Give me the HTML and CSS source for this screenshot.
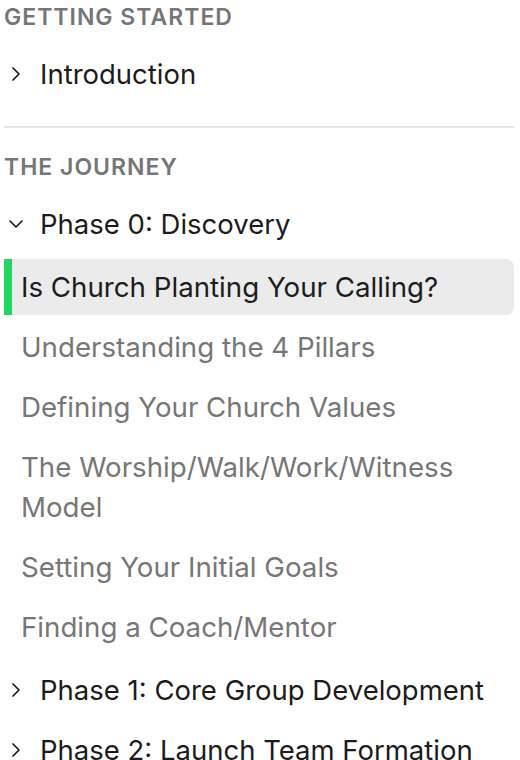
FILE: index.html
```html
<!DOCTYPE html>
<html lang="en">
<head>
    <meta charset="UTF-8">
    <meta name="viewport" content="width=device-width, initial-scale=1.0">
    <title>Docs Sidebar</title>
    <link rel="stylesheet" href="styles.css">
</head>
<body>
    <nav class="sidebar">
        <!-- Getting Started -->
        <div class="section">
            <div class="section-title">Getting Started</div>
            <div class="group">
                <div class="group-row">
                    <svg class="chevron" viewBox="0 0 24 24"><path d="m9 18 6-6-6-6"/></svg>
                    <span>Introduction</span>
                </div>
            </div>
        </div>

        <hr class="divider">

        <!-- The Journey -->
        <div class="section">
            <div class="section-title">The Journey</div>
            <div class="group">
                <div class="group-row">
                    <svg class="chevron" viewBox="0 0 24 24"><path d="m6 9 6 6 6-6"/></svg>
                    <span>Phase 0: Discovery</span>
                </div>
                <ul class="sub-list">
                    <li class="sub-item active">Is Church Planting Your Calling?</li>
                    <li class="sub-item">Understanding the 4 Pillars</li>
                    <li class="sub-item">Defining Your Church Values</li>
                    <li class="sub-item">The Worship/Walk/Work/Witness Model</li>
                    <li class="sub-item">Setting Your Initial Goals</li>
                    <li class="sub-item">Finding a Coach/Mentor</li>
                </ul>
            </div>
            <div class="group">
                <div class="group-row">
                    <svg class="chevron" viewBox="0 0 24 24"><path d="m9 18 6-6-6-6"/></svg>
                    <span>Phase 1: Core Group Development</span>
                </div>
            </div>
            <div class="group">
                <div class="group-row">
                    <svg class="chevron" viewBox="0 0 24 24"><path d="m9 18 6-6-6-6"/></svg>
                    <span>Phase 2: Launch Team Formation</span>
                </div>
            </div>
        </div>
    </nav>
</body>
</html>
```

FILE: styles.css
```css
body {
    margin: 0;
    padding: 0 6px 0 4px;
    background-color: #ffffff;
    font-family: Inter, "Noto Sans", sans-serif;
    color: #1c1c1c;
    overflow: hidden;
}

.sidebar {
    display: flex;
    flex-direction: column;
}

.section {
    display: flex;
    flex-direction: column;
    gap: 4px;
}

.section-title {
    font-size: 23px;
    font-weight: 600;
    line-height: 34px;
    letter-spacing: 1px;
    text-transform: uppercase;
    color: #767676;
    margin-bottom: 8px;
}

.group {
    display: flex;
    flex-direction: column;
}

.group-row {
    display: flex;
    align-items: center;
    gap: 12px;
    height: 56px;
    font-size: 27.5px;
    color: #1c1c1c;
}

.chevron {
    width: 24px;
    height: 24px;
    flex-shrink: 0;
    fill: none;
    stroke: #1c1c1c;
    stroke-width: 1.7;
    stroke-linecap: round;
    stroke-linejoin: round;
}

.divider {
    border: none;
    border-top: 2px solid #e6e6e6;
    margin: 24px 0 22px;
}

.sub-list {
    list-style: none;
    margin: 7px 0 3px;
    padding: 0;
    display: flex;
    flex-direction: column;
    gap: 4px;
}

.sub-item {
    padding: 8px 12px 8px 9px;
    border-left: 8px solid transparent;
    font-size: 27.7px;
    line-height: 40px;
    color: #777777;
}

.sub-item.active {
    background-color: #ebebeb;
    border-left-color: #22d760;
    border-radius: 0 8px 8px 0;
    color: #1c1c1c;
}
```
